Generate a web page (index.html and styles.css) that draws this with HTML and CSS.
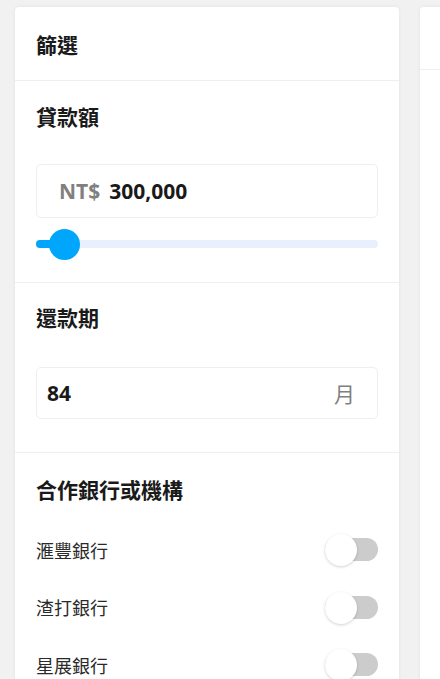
FILE: index.html
```html
<!DOCTYPE html>
<html lang="zh-Hant">
<head>
<meta charset="utf-8">
<title>篩選</title>
<link rel="stylesheet" href="styles.css">
</head>
<body>
<div class="page">
  <aside class="card filter">
    <div class="card-head">篩選</div>

    <section class="sec sec-amount">
      <h3 class="sec-title">貸款額</h3>
      <div class="field field-amount">
        <span class="prefix">NT$</span>
        <span class="value">300,000</span>
      </div>
      <div class="slider">
        <div class="track"><div class="fill"></div></div>
        <div class="thumb"></div>
      </div>
    </section>

    <section class="sec sec-term">
      <h3 class="sec-title">還款期</h3>
      <div class="field field-term">
        <span class="value">84</span>
        <span class="suffix">月</span>
      </div>
    </section>

    <section class="sec sec-banks">
      <h3 class="sec-title">合作銀行或機構</h3>
      <ul class="banks">
        <li class="bank"><span class="bank-name">滙豐銀行</span><span class="toggle"><span class="knob"></span></span></li>
        <li class="bank"><span class="bank-name">渣打銀行</span><span class="toggle"><span class="knob"></span></span></li>
        <li class="bank"><span class="bank-name">星展銀行</span><span class="toggle"><span class="knob"></span></span></li>
      </ul>
    </section>
  </aside>

  <main class="card results">
    <div class="results-head"></div>
  </main>
</div>
</body>
</html>
```

FILE: styles.css
```css
* { box-sizing: border-box; }

html, body {
  margin: 0;
  padding: 0;
  height: 679px;
  overflow: hidden;
  background: #f1f1f1;
  font-family: "Open Sans", "Noto Sans CJK TC", sans-serif;
  color: #1a1a1a;
}

.page {
  display: flex;
  gap: 21px;
  padding: 7px 0 0 15px;
  width: 440px;
  height: 679px;
  overflow: hidden;
}

.card {
  background: #fff;
  border-radius: 4px;
  box-shadow: 0 0 4px rgba(0, 0, 0, 0.06);
}

.filter {
  width: 384px;
  flex: none;
  height: 700px;
}

.card-head {
  height: 74px;
  padding: 0 21px;
  display: flex;
  align-items: center;
  font-size: 21px;
  font-weight: 700;
  border-bottom: 1px solid #efefef;
}

.sec {
  padding: 20px 21px 23px;
  border-bottom: 1px solid #efefef;
}

.sec-title {
  margin: 0;
  font-size: 21px;
  line-height: 32px;
  font-weight: 700;
}

.field {
  display: flex;
  align-items: center;
  border: 1px solid #efefef;
  border-radius: 5px;
  font-size: 21px;
  font-weight: 700;
}

.field-amount {
  margin-top: 31px;
  height: 54px;
  padding-left: 22px;
  gap: 9px;
}

.prefix { color: #808080; }

.slider {
  position: relative;
  margin-top: 11px;
  height: 30px;
  display: flex;
  align-items: center;
}

.track {
  width: 100%;
  height: 8px;
  border-radius: 4px;
  background: #e8effd;
  overflow: hidden;
}

.fill {
  width: 28px;
  height: 100%;
  background: #00a6fb;
}

.thumb {
  position: absolute;
  left: 13px;
  top: 0;
  width: 31px;
  height: 31px;
  border-radius: 50%;
  background: #00a6fb;
}

.sec-term {
  padding: 19px 21px 33px;
}

.field-term {
  margin-top: 33px;
  height: 52px;
  padding: 0 22px 0 10px;
  justify-content: space-between;
}

.suffix {
  color: #808080;
  font-weight: 400;
  font-family: "Noto Sans CJK TC", sans-serif;
}

.sec-banks {
  padding: 21px 21px 0;
  border-bottom: none;
}

.banks {
  list-style: none;
  margin: 15px 0 0;
  padding: 0;
}

.bank {
  height: 57.5px;
  display: flex;
  align-items: center;
  justify-content: space-between;
}

.bank-name {
  font-family: "Noto Sans CJK TC", sans-serif;
  font-size: 18px;
  color: #2a2a2a;
}

.toggle {
  position: relative;
  width: 53px;
  height: 31px;
  display: flex;
  align-items: center;
}

.toggle::before {
  content: "";
  display: block;
  width: 100%;
  height: 23px;
  border-radius: 12px;
  background: #cccccc;
}

.knob {
  position: absolute;
  left: 0;
  top: 0;
  width: 32px;
  height: 32px;
  border-radius: 50%;
  background: #fff;
  box-shadow: 0 1px 3px rgba(0, 0, 0, 0.18);
}

.results {
  width: 220px;
  height: 700px;
  flex: none;
}

.results-head {
  height: 63px;
  border-bottom: 1px solid #efefef;
}
```
